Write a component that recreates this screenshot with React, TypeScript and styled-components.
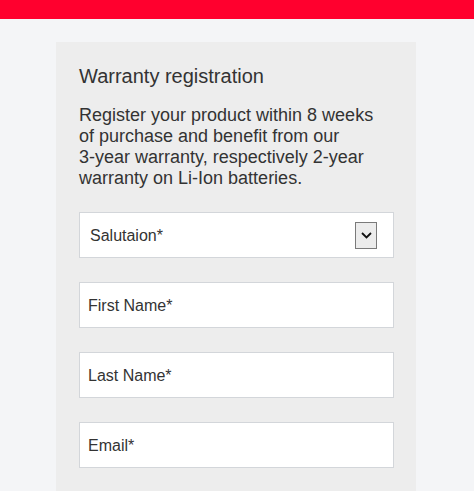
import styled, { createGlobalStyle } from "styled-components";

const GlobalStyle = createGlobalStyle`
  html, body {
    margin: 0;
    padding: 0;
    background-color: #f4f5f7;
    font-family: "Liberation Sans", Arial, sans-serif;
    color: #333;
  }
`;

const TopBar = styled.div`
  height: 19px;
  background-color: #ff002e;
`;

const Page = styled.main`
  padding-top: 23px;
  padding-left: 56px;
`;

const Card = styled.section`
  width: 360px;
  box-sizing: border-box;
  background-color: #ededed;
  padding: 23px 22px 40px 23px;
  min-height: 460px;
`;

const Title = styled.h2`
  margin: 0 0 17px;
  font-size: 20px;
  font-weight: 400;
  line-height: 23px;
  color: #333;
`;

const Intro = styled.p`
  margin: 0 0 23px;
  max-width: 300px;
  font-size: 18px;
  line-height: 21px;
  color: #333;
`;

// keeps "3-year" etc. from splitting at the hyphen
const NoBreak = styled.span`
  white-space: nowrap;
`;

const Fields = styled.div`
  display: flex;
  flex-direction: column;
  gap: 24px;
`;

const SelectBox = styled.div`
  display: flex;
  align-items: center;
  justify-content: space-between;
  height: 46px;
  box-sizing: border-box;
  padding: 1px 16px 0 10px;
  background: #fff;
  border: 1px solid #d3d6da;
  font-size: 16px;
  color: #333;
`;

const ArrowButton = styled.span`
  display: flex;
  align-items: center;
  justify-content: center;
  width: 22px;
  height: 27px;
  box-sizing: border-box;
  border: 1px solid #7a7a7a;
  background: #ececec;
`;

const TextInput = styled.input`
  height: 46px;
  box-sizing: border-box;
  width: 100%;
  padding: 2px 8px 0;
  background: #fff;
  border: 1px solid #d3d6da;
  border-radius: 0;
  font-family: "Liberation Sans", Arial, sans-serif;
  font-size: 16px;
  color: #333;
  outline: none;

  &::placeholder {
    color: #333;
    opacity: 1;
  }
`;

export default function App() {
  return (
    <>
      <GlobalStyle />
      <TopBar />
      <Page>
        <Card>
          <Title>Warranty registration</Title>
          <Intro>
            Register your product within 8 weeks of purchase and benefit from
            our <NoBreak>3-year</NoBreak> warranty, respectively{" "}
            <NoBreak>2-year</NoBreak> warranty on <NoBreak>Li-Ion</NoBreak>{" "}
            batteries.
          </Intro>
          <Fields>
            <SelectBox>
              <span>Salutaion*</span>
              <ArrowButton>
                <svg width="11" height="7" viewBox="0 0 11 7">
                  <path d="M1 1l4.5 4.5L10 1" fill="none" stroke="#111" strokeWidth="1.8" />
                </svg>
              </ArrowButton>
            </SelectBox>
            <TextInput placeholder="First Name*" />
            <TextInput placeholder="Last Name*" />
            <TextInput placeholder="Email*" />
          </Fields>
        </Card>
      </Page>
    </>
  );
}
